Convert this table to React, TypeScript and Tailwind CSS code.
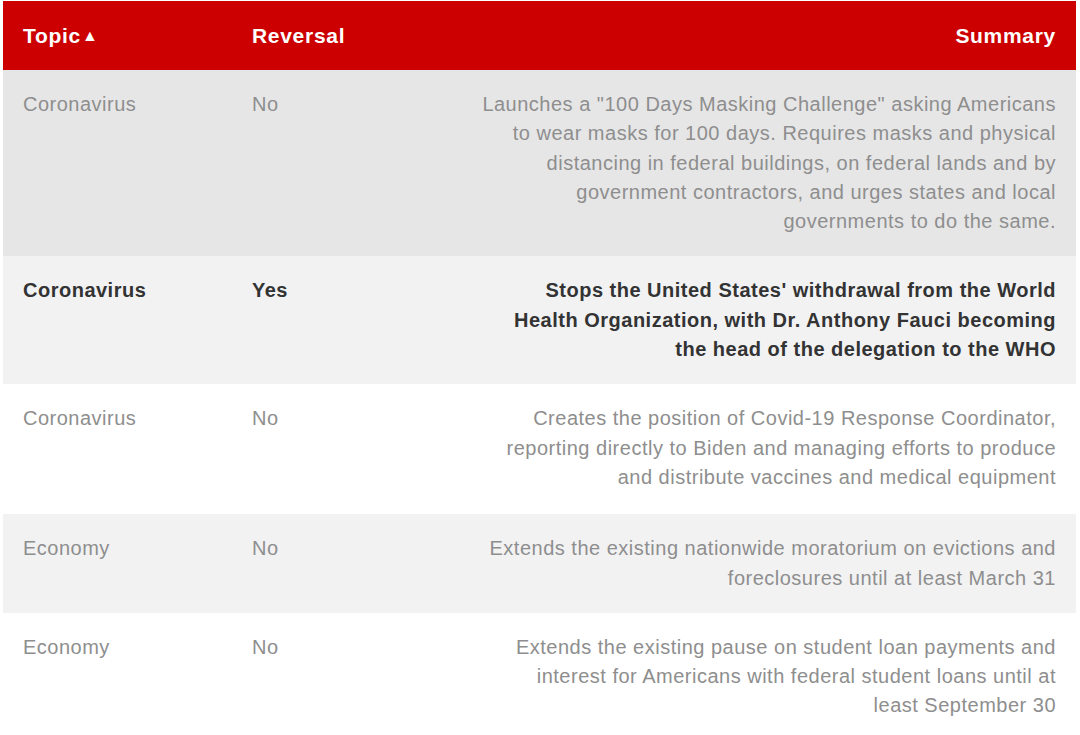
import React from "react";

interface Row {
  topic: string;
  reversal: string;
  summary: string[];
  bg: string;
  pad: string;
  bold?: boolean;
}

// lines are broken by hand so the wrap matches the original table
const rows: Row[] = [
  {
    topic: "Coronavirus",
    reversal: "No",
    summary: [
      'Launches a "100 Days Masking Challenge" asking Americans',
      "to wear masks for 100 days. Requires masks and physical",
      "distancing in federal buildings, on federal lands and by",
      "government contractors, and urges states and local",
      "governments to do the same.",
    ],
    bg: "bg-[#e6e6e7]",
    pad: "pt-5 pb-5",
  },
  {
    topic: "Coronavirus",
    reversal: "Yes",
    summary: [
      "Stops the United States' withdrawal from the World",
      "Health Organization, with Dr. Anthony Fauci becoming",
      "the head of the delegation to the WHO",
    ],
    bg: "bg-[#f2f2f3]",
    pad: "pt-5 pb-5",
    bold: true,
  },
  {
    topic: "Coronavirus",
    reversal: "No",
    summary: [
      "Creates the position of Covid-19 Response Coordinator,",
      "reporting directly to Biden and managing efforts to produce",
      "and distribute vaccines and medical equipment",
    ],
    bg: "bg-white",
    pad: "pt-5 pb-[22px]",
  },
  {
    topic: "Economy",
    reversal: "No",
    summary: [
      "Extends the existing nationwide moratorium on evictions and",
      "foreclosures until at least March 31",
    ],
    bg: "bg-[#f2f2f3]",
    pad: "pt-5 pb-5",
  },
  {
    topic: "Economy",
    reversal: "No",
    summary: [
      "Extends the existing pause on student loan payments and",
      "interest for Americans with federal student loans until at",
      "least September 30",
    ],
    bg: "bg-white",
    pad: "pt-5 pb-5",
  },
];

export default function App() {
  return (
    <div className="w-[1080px] h-[735px] overflow-hidden bg-white pl-[3px] pr-[4px] pt-[1px] font-['Liberation_Sans',Arial,sans-serif]">
      <div className="grid grid-cols-[229px_228px_1fr] h-[69px] items-center bg-[#cc0000] text-white font-bold text-[21px] tracking-[0.7px]">
        <div className="pl-5 flex items-center gap-[1px]">
          Topic<span className="text-[16px] tracking-normal leading-none">▲</span>
        </div>
        <div className="pl-5">Reversal</div>
        <div className="pr-5 text-right">Summary</div>
      </div>
      {rows.map((r, i) => (
        <div
          key={i}
          className={`grid grid-cols-[229px_228px_1fr] text-[20px] tracking-[0.5px] leading-[29.3px] ${r.pad} ${r.bg} ${
            r.bold ? "font-bold text-[#333333]" : "text-[#8e8e8e]"
          }`}
        >
          <div className="pl-5">{r.topic}</div>
          <div className="pl-5">{r.reversal}</div>
          <div className="pr-5 text-right whitespace-nowrap">
            {r.summary.map((line, j) => (
              <div key={j}>{line}</div>
            ))}
          </div>
        </div>
      ))}
    </div>
  );
}
